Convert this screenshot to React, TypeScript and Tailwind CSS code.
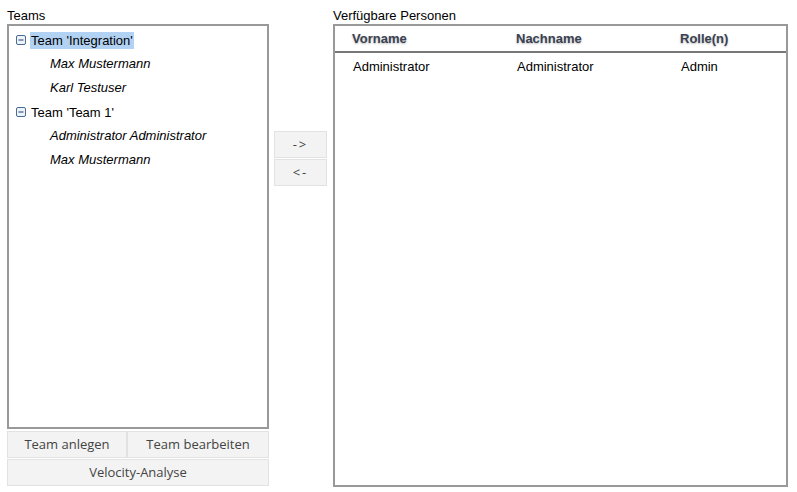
import React from 'react';

const MinusBox = () => (
    <svg width="10" height="10" viewBox="0 0 10 10" className="shrink-0">
        <rect x="0.5" y="0.5" width="9" height="9" rx="1.5" fill="#eef3fa" stroke="#4a6a96" />
        <rect x="2.5" y="4.5" width="5" height="1" fill="#1f3a66" />
    </svg>
);

const teams = [
    { name: "Team 'Integration'", selected: true, members: ['Max Mustermann', 'Karl Testuser'] },
    { name: "Team 'Team 1'", selected: false, members: ['Administrator Administrator', 'Max Mustermann'] },
];

const GrayButton: React.FC<{ label: string; className?: string }> = ({ label, className }) => (
    <button className={`bg-[#f3f3f3] border border-[#e2e2e2] text-[#444] text-[13px] font-['Open_Sans',sans-serif] flex items-center justify-center ${className ?? ''}`}>
        {label}
    </button>
);

export default function App() {
    return (
        <div className="w-[797px] h-[492px] bg-white flex pl-[7px] pt-[8px] font-['Liberation_Sans',Arial,sans-serif] text-[13px] text-black">
            {/* Teams tree */}
            <div className="w-[262px] flex flex-col">
                <div className="h-[16px] leading-[16px]">Teams</div>
                <div className="h-[405px] border-2 border-[#999] pt-[2px] pl-[7px]">
                    {teams.map((t) => (
                        <div key={t.name}>
                            <div className="h-[24px] flex items-center gap-[4px]">
                                <MinusBox />
                                <span className={`px-[1px] leading-[17px] ${t.selected ? 'bg-[#b2d2f3]' : ''}`}>{t.name}</span>
                            </div>
                            {t.members.map((m, i) => (
                                <div key={i} className="h-[24px] flex items-center pl-[34px] italic">{m}</div>
                            ))}
                        </div>
                    ))}
                </div>
                <div className="flex mt-[2px]">
                    <GrayButton label="Team anlegen" className="w-[120px] h-[27px]" />
                    <GrayButton label="Team bearbeiten" className="flex-1 h-[27px]" />
                </div>
                <GrayButton label="Velocity-Analyse" className="w-full h-[27px] mt-[1px]" />
            </div>

            {/* move buttons */}
            <div className="w-[53px] ml-[5px] mr-[6px] pt-[123px] flex flex-col gap-[1px]">
                <GrayButton label="->" className="h-[27px] w-full tracking-[2px]" />
                <GrayButton label="<-" className="h-[27px] w-full tracking-[2px]" />
            </div>

            {/* persons table */}
            <div className="w-[455px] flex flex-col">
                <div className="h-[16px] leading-[16px]">Verfügbare Personen</div>
                <div className="h-[463px] border-2 border-[#999]">
                    <div className="h-[27px] flex items-center border-b-2 border-[#777] font-bold text-[#3a4150] [text-shadow:0_1px_2px_#b8b8b8]">
                        <div className="w-[181px] pl-[17px]">Vorname</div>
                        <div className="w-[164px]">Nachname</div>
                        <div className="flex-1">Rolle(n)</div>
                    </div>
                    <div className="h-[28px] flex items-center">
                        <div className="w-[182px] pl-[18px]">Administrator</div>
                        <div className="w-[164px]">Administrator</div>
                        <div className="flex-1">Admin</div>
                    </div>
                </div>
            </div>
        </div>
    );
}
